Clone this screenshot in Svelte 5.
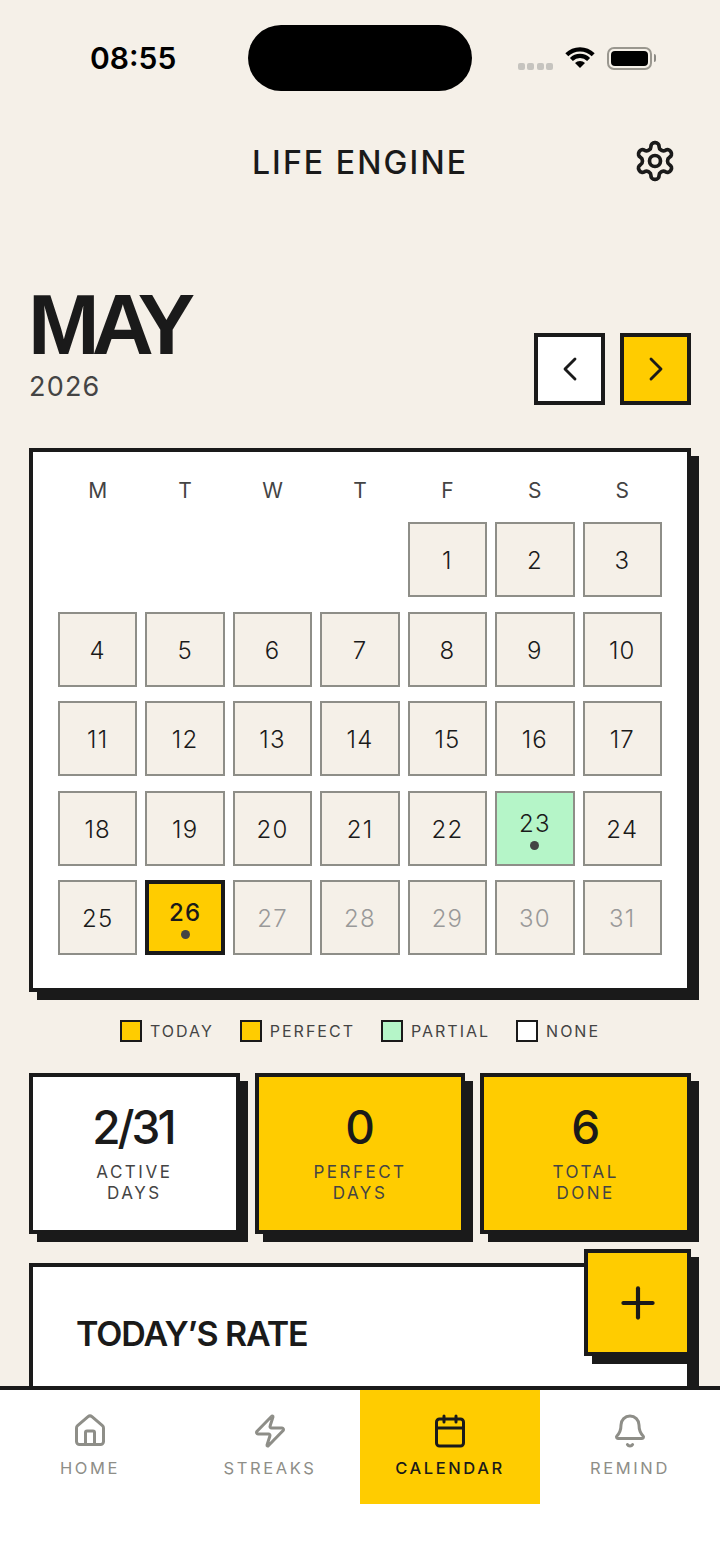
<script>
  const weekdays = ['M', 'T', 'W', 'T', 'F', 'S', 'S']
  const today = 26
  const partial = [23]
  const days = Array.from({ length: 31 }, (_, i) => i + 1)
  const legend = [
    { label: 'TODAY', color: 'yellow' },
    { label: 'PERFECT', color: 'yellow' },
    { label: 'PARTIAL', color: 'mint' },
    { label: 'NONE', color: 'white' },
  ]
  const stats = [
    { value: '2/31', label: 'ACTIVE\nDAYS', yellow: false },
    { value: '0', label: 'PERFECT\nDAYS', yellow: true },
    { value: '6', label: 'TOTAL\nDONE', yellow: true },
  ]
  const tabs = ['home', 'streaks', 'calendar', 'remind']
</script>

<div class="page">
  <div class="status">
    <span class="time">08:55</span>
    <div class="island"></div>
    <div class="status-icons">
      <div class="signal"><i></i><i></i><i></i><i></i></div>
      <svg class="wifi" width="30" height="23" viewBox="0 0 30 23" fill="none" stroke="#000" stroke-width="4.2">
        <path d="M1.8 8.8a18.7 18.7 0 0 1 26.4 0" />
        <path d="M6.4 13.4a12.2 12.2 0 0 1 17.2 0" />
        <path d="M15 22 10 17a7 7 0 0 1 10 0z" fill="#000" stroke="none" />
      </svg>
      <div class="battery"><div class="battery-fill"></div></div>
    </div>
  </div>

  <header class="topbar">
    <h1>LIFE ENGINE</h1>
    <svg class="gear" width="44" height="44" viewBox="0 0 24 24" fill="none" stroke="#1a1a1a" stroke-width="2" stroke-linecap="round" stroke-linejoin="round">
      <path d="M12.22 2h-.44a2 2 0 0 0-2 2v.18a2 2 0 0 1-1 1.73l-.43.25a2 2 0 0 1-2 0l-.15-.08a2 2 0 0 0-2.73.73l-.22.38a2 2 0 0 0 .73 2.73l.15.1a2 2 0 0 1 1 1.72v.51a2 2 0 0 1-1 1.74l-.15.09a2 2 0 0 0-.73 2.73l.22.38a2 2 0 0 0 2.73.73l.15-.08a2 2 0 0 1 2 0l.43.25a2 2 0 0 1 1 1.73V20a2 2 0 0 0 2 2h.44a2 2 0 0 0 2-2v-.18a2 2 0 0 1 1-1.73l.43-.25a2 2 0 0 1 2 0l.15.08a2 2 0 0 0 2.73-.73l.22-.39a2 2 0 0 0-.73-2.73l-.15-.08a2 2 0 0 1-1-1.74v-.5a2 2 0 0 1 1-1.74l.15-.09a2 2 0 0 0 .73-2.73l-.22-.38a2 2 0 0 0-2.73-.73l-.15.08a2 2 0 0 1-2 0l-.43-.25a2 2 0 0 1-1-1.73V4a2 2 0 0 0-2-2z" />
      <circle cx="12" cy="12" r="3" />
    </svg>
  </header>

  <main class="content">
    <section class="month-row">
      <div>
        <div class="month">MAY</div>
        <div class="year">2026</div>
      </div>
      <div class="month-nav">
        <button class="nav-btn" aria-label="Previous month">
          <svg width="40" height="40" viewBox="0 0 24 24" fill="none" stroke="#1a1a1a" stroke-width="1.7" stroke-linecap="round" stroke-linejoin="round"><path d="m15 18-6-6 6-6" /></svg>
        </button>
        <button class="nav-btn next" aria-label="Next month">
          <svg width="40" height="40" viewBox="0 0 24 24" fill="none" stroke="#1a1a1a" stroke-width="1.7" stroke-linecap="round" stroke-linejoin="round"><path d="m9 18 6-6-6-6" /></svg>
        </button>
      </div>
    </section>

    <section class="card calendar">
      <div class="weekdays">
        {#each weekdays as d}
          <span>{d}</span>
        {/each}
      </div>
      <div class="grid">
        {#each days as d}
          <div
            class="cell"
            style={d === 1 ? 'grid-column-start: 5' : ''}
            class:today={d === today}
            class:partial={partial.includes(d)}
            class:future={d > today}
          >
            <span>{d}</span>
            {#if d === today || partial.includes(d)}<i class="dot"></i>{/if}
          </div>
        {/each}
      </div>
    </section>

    <div class="legend">
      {#each legend as item}
        <div class="legend-item">
          <i class="swatch {item.color}"></i>
          <span>{item.label}</span>
        </div>
      {/each}
    </div>

    <section class="stats">
      {#each stats as s}
        <div class="card stat" class:yellow={s.yellow}>
          <div class="stat-value">{s.value}</div>
          <div class="stat-label">{s.label}</div>
        </div>
      {/each}
    </section>

    <section class="card rate">
      <h2>TODAY’S RATE</h2>
    </section>
  </main>

  <button class="fab" aria-label="Add">
    <svg width="50" height="50" viewBox="0 0 24 24" fill="none" stroke="#1a1a1a" stroke-width="2" stroke-linecap="round" stroke-linejoin="round"><path d="M5 12h14" /><path d="M12 5v14" /></svg>
  </button>

  <nav class="tabbar">
    {#each tabs as t}
      <div class="tab" class:active={t === 'calendar'}>
        <svg width="36" height="36" viewBox="0 0 24 24" fill="none" stroke="currentColor" stroke-width="2" stroke-linecap="round" stroke-linejoin="round">
          {#if t === 'home'}
            <path d="M15 21v-8a1 1 0 0 0-1-1h-4a1 1 0 0 0-1 1v8" />
            <path d="M3 10a2 2 0 0 1 .709-1.528l7-5.999a2 2 0 0 1 2.582 0l7 5.999A2 2 0 0 1 21 10v9a2 2 0 0 1-2 2H5a2 2 0 0 1-2-2z" />
          {:else if t === 'streaks'}
            <path d="M4 14a1 1 0 0 1-.78-1.63l9.9-10.2a.5.5 0 0 1 .86.46l-1.92 6.02A1 1 0 0 0 13 10h7a1 1 0 0 1 .78 1.63l-9.9 10.2a.5.5 0 0 1-.86-.46l1.92-6.02A1 1 0 0 0 11 14z" />
          {:else if t === 'calendar'}
            <path d="M8 2v4" /><path d="M16 2v4" />
            <rect x="3" y="4" width="18" height="18" rx="2" />
            <path d="M3 10h18" />
          {:else}
            <path d="M10.268 21a2 2 0 0 0 3.464 0" />
            <path d="M3.262 15.326A1 1 0 0 0 4 17h16a1 1 0 0 0 .74-1.673C19.41 13.956 18 12.499 18 8A6 6 0 0 0 6 8c0 4.499-1.411 5.956-2.738 7.326" />
          {/if}
        </svg>
        <span>{t.toUpperCase()}</span>
      </div>
    {/each}
  </nav>
</div>

<style>
  :global(body) {
    margin: 0;
    background: #f5f0e8;
  }
  .page {
    position: relative;
    width: 720px;
    height: 1565px;
    overflow: hidden;
    background: #f5f0e8;
    color: #1a1a1a;
    font-family: Inter, 'Liberation Sans', sans-serif;
  }

  .status {
    height: 116px;
    display: flex;
    box-sizing: border-box;
    padding: 25px 68px 0 90px;
  }
  .time {
    flex: 0 0 158px;
    font-size: 30px;
    font-weight: 600;
    line-height: 66px;
    color: #000;
  }
  .island {
    flex: 0 0 224px;
    height: 66px;
    border-radius: 33px;
    background: #000;
  }
  .status-icons {
    display: flex;
    align-items: center;
    height: 66px;
    margin-left: auto;
    gap: 12px;
  }
  .signal {
    display: flex;
    gap: 2.5px;
    margin-top: 16px;
  }
  .signal i {
    width: 7px;
    height: 7px;
    border-radius: 2px;
    background: #c6c4bf;
  }
  .wifi {
    margin-top: -1px;
  }
  .battery {
    position: relative;
    box-sizing: border-box;
    width: 45px;
    height: 23px;
    border: 2px solid #9a978f;
    border-radius: 7px;
    padding: 2px;
  }
  .battery::after {
    content: '';
    position: absolute;
    right: -6px;
    top: 5px;
    width: 2px;
    height: 8px;
    border-radius: 0 2px 2px 0;
    background: #8c8a84;
  }
  .battery-fill {
    height: 100%;
    border-radius: 4px;
    background: #000;
  }

  .topbar {
    position: relative;
    height: 92px;
    display: flex;
    align-items: center;
    justify-content: center;
  }
  h1 {
    margin: 0;
    font-size: 32px;
    font-weight: 500;
    letter-spacing: 2.1px;
  }
  .gear {
    position: absolute;
    right: 43px;
    top: 23px;
  }

  .content {
    padding: 0 29px;
  }
  .month-row {
    display: flex;
    justify-content: space-between;
    align-items: flex-end;
    margin-top: 72px;
  }
  .month {
    font-family: 'Liberation Sans', sans-serif;
    font-size: 86px;
    font-weight: 700;
    line-height: 88px;
    letter-spacing: -8px;
    margin-left: -1px;
  }
  .year {
    font-size: 27px;
    line-height: 34px;
    letter-spacing: 1.2px;
    color: #444;
    margin-top: 2px;
  }
  .month-nav {
    display: flex;
    gap: 15px;
    margin-bottom: -1px;
  }
  .nav-btn {
    box-sizing: border-box;
    width: 71px;
    height: 72px;
    padding: 0;
    border: 4px solid #1a1a1a;
    background: #fff;
    display: flex;
    align-items: center;
    justify-content: center;
  }
  .nav-btn.next {
    background: #ffcc00;
  }

  .card {
    box-sizing: border-box;
    border: 4px solid #1a1a1a;
    background: #fff;
    box-shadow: 8px 8px 0 #1a1a1a;
  }
  .calendar {
    margin-top: 44px;
    padding: 25px 25px 33px;
  }
  .weekdays {
    display: grid;
    grid-template-columns: repeat(7, 1fr);
    column-gap: 8px;
    height: 45px;
    text-align: center;
    font-size: 21px;
    line-height: 28px;
    color: #444;
  }
  .grid {
    display: grid;
    grid-template-columns: repeat(7, 1fr);
    gap: 14.5px 8px;
  }
  .cell {
    box-sizing: border-box;
    height: 75px;
    padding-top: 3px;
    border: 2px solid #8e8e88;
    background: #f5f0e8;
    display: flex;
    flex-direction: column;
    align-items: center;
    justify-content: center;
    gap: 3px;
    font-size: 24px;
    font-weight: 300;
    line-height: 28px;
    letter-spacing: 1.2px;
  }
  .cell.future {
    color: #999;
  }
  .cell.partial {
    background: #b5f5c8;
  }
  .cell.today {
    background: #ffcc00;
    border: 4px solid #1a1a1a;
    font-weight: 500;
  }
  .dot {
    width: 9px;
    height: 9px;
    border-radius: 50%;
    background: #444;
  }

  .legend {
    display: flex;
    justify-content: center;
    gap: 26px;
    margin-top: 28px;
  }
  .legend-item {
    display: flex;
    align-items: center;
    gap: 8px;
    font-size: 16px;
    line-height: 20px;
    letter-spacing: 2px;
    color: #444;
  }
  .swatch {
    box-sizing: border-box;
    width: 22px;
    height: 22px;
    border: 2px solid #1a1a1a;
  }
  .swatch.yellow {
    background: #ffcc00;
  }
  .swatch.mint {
    background: #b5f5c8;
  }
  .swatch.white {
    background: #fff;
  }

  .stats {
    display: grid;
    grid-template-columns: repeat(3, 1fr);
    gap: 15px;
    margin-top: 31px;
  }
  .stat {
    height: 161px;
    text-align: center;
    padding-top: 22px;
  }
  .stat.yellow {
    background: #ffcc00;
  }
  .stat-value {
    font-size: 46px;
    font-weight: 500;
    line-height: 56px;
    letter-spacing: -3px;
    padding-right: 3px;
  }
  .stat-label {
    white-space: pre-line;
    font-size: 17px;
    line-height: 21px;
    letter-spacing: 2.5px;
    color: #444;
    margin-top: 7px;
  }

  .rate {
    height: 200px;
    margin-top: 29px;
    padding: 45px 43px;
  }
  h2 {
    margin: 0;
    font-size: 34px;
    font-weight: 600;
    line-height: 44px;
    letter-spacing: -1.1px;
  }

  .fab {
    position: absolute;
    left: 584px;
    top: 1249px;
    box-sizing: border-box;
    width: 107px;
    height: 107px;
    padding: 0;
    border: 4px solid #1a1a1a;
    background: #ffcc00;
    box-shadow: 8px 8px 0 #1a1a1a;
    display: flex;
    align-items: center;
    justify-content: center;
  }

  .tabbar {
    position: absolute;
    left: 0;
    right: 0;
    bottom: 0;
    height: 179px;
    box-sizing: border-box;
    border-top: 4px solid #1a1a1a;
    background: #fff;
    display: grid;
    grid-template-columns: repeat(4, 1fr);
    align-items: start;
  }
  .tab {
    height: 114px;
    box-sizing: border-box;
    padding-top: 23px;
    display: flex;
    flex-direction: column;
    align-items: center;
    gap: 9px;
    color: #8e8e88;
    font-size: 16.5px;
    letter-spacing: 2.6px;
  }
  .tab.active {
    background: #ffcc00;
    color: #1a1a1a;
    font-weight: 500;
  }
</style>
